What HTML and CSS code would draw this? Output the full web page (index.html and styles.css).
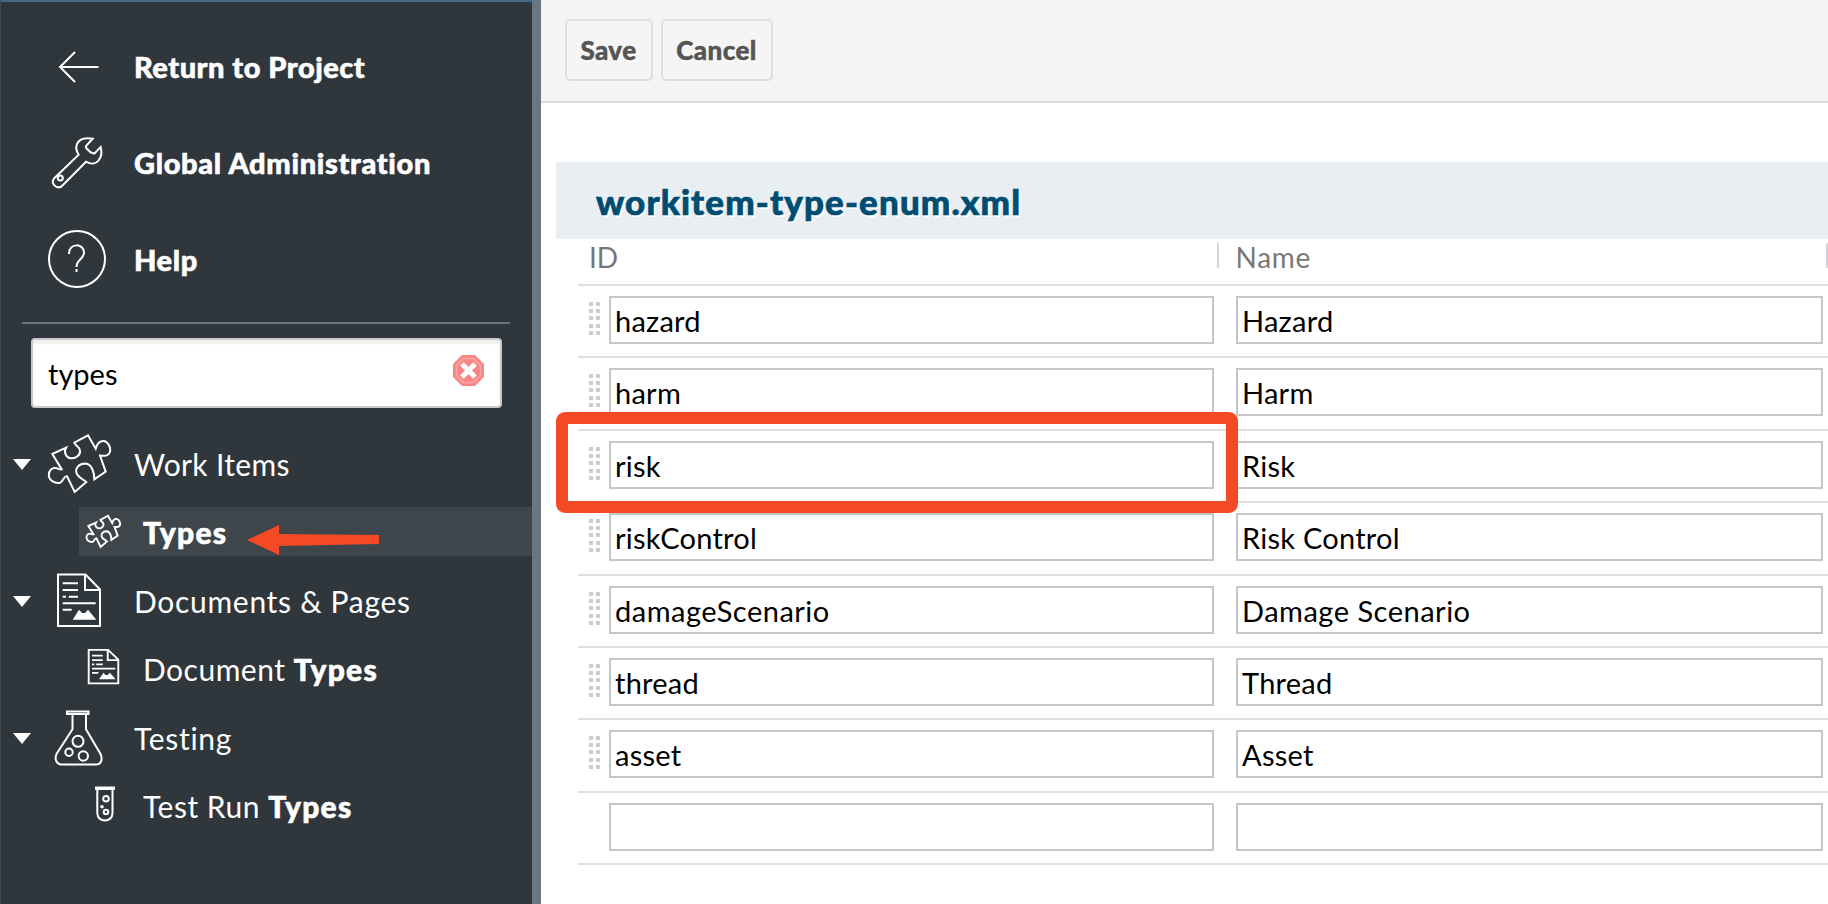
FILE: index.html
```html
<!DOCTYPE html>
<html lang="en">
<head>
<meta charset="utf-8">
<title>workitem-type-enum.xml</title>
<link rel="stylesheet" href="styles.css">
</head>
<body>
<svg class="defs" width="0" height="0">
  <symbol id="puzzle" viewBox="0 0 62 58" overflow="visible">
    <path d="M40 .3 47.7 13.7C49 9 52 5.700 56 6C62 8 64.500 17 59.500 20C57 21.500 54 20.500 52 20.500L57.700 36.700 46.300 44.300C46.500 38 44 29 37.500 28.500C31 28.500 27 33 28.500 38C29.500 42 34 43.500 38.300 47L26.700 57 19 41.300C15.500 41 15.500 46.500 12 47.800C7 49 1 45.500 .8 40C.8 35.500 4 32.500 7.500 33C10 33.200 12 35 13.700 34.300L4.300 19 18 12.700C15.500 17 18 22.500 22.500 23.200C28 24 32.500 20 32 15.500C31.500 11.500 28 11.500 26.300 7.700Z"/>
  </symbol>
  <symbol id="doc" viewBox="10 2 44 54" preserveAspectRatio="none" overflow="visible">
    <path d="M11 3.500H38.500L53 18.500V55H11ZM38 4V19H53M15.700 12.300H31M15.700 19H31M15.700 25.700H19M21.700 25.700H31M15.700 32.300H48.700M15.700 38.700H24.700"/>
    <path class="solid" d="M25.700 48.700 32 38.700 35 42 38 42 41 38.700 49.300 48.700Z"/>
  </symbol>
</svg>
<div class="app">
  <aside class="sidebar">
    <nav class="nav">
      <a class="nav-item"><svg class="icon" viewBox="0 0 60 60"><path d="M13 30H51.500M28 15 13 30 28 45"/></svg><span class="t-return">Return to Project</span></a>
      <a class="nav-item"><svg class="icon" viewBox="0 0 60 60"><path d="M45.700 5.700C38 4.500 32 6.500 30 11C28.500 15 29.500 18.500 31.700 21.700L7 45.500C3.500 50 9 56.500 14.500 53.500L39 28.700C44 31.500 49 31 51.500 27.500C54.500 24 55 19 53.700 14L47.300 20.700 43.500 19.300C41.500 16.500 38 16 39 13Z"/><circle cx="13.300" cy="45" r="2.500"/></svg><span class="t-admin">Global Administration</span></a>
      <a class="nav-item"><svg class="icon" viewBox="0 0 60 60"><circle cx="30" cy="30" r="28"/><path d="M22 25C21.500 13.500 37 14 37 23.500C37 30.500 29.500 30 29.500 38M29.500 40V43"/></svg><span class="t-help">Help</span></a>
    </nav>
    <div class="rule"></div>
    <div class="search"><span class="t-search">types</span>
      <svg class="clear" viewBox="0 0 31 31"><path class="oct" d="M9 0H22L31 9V22L22 31H9L0 22V9Z"/><path class="ring" d="M10.500 3.500H20.500L27.500 10.500V20.500L20.500 27.500H10.500L3.500 20.500V10.500Z"/><path class="cross" d="M9 9 22 22M22 9 9 22"/></svg>
    </div>
    <div class="tree">
      <div class="group"><i class="caret"></i><svg class="icon puzzle"><use href="#puzzle"/></svg><span class="t-work">Work Items</span></div>
      <div class="leaf"><div class="leaf-in selected"><svg class="small puzzle-s"><use href="#puzzle"/></svg><b class="t-types">Types</b></div>
        <svg class="pointer" viewBox="0 0 134 31"><path d="M0 16 32 1V10L132 11V20L32 22V31Z"/></svg></div>
      <div class="group"><i class="caret"></i><svg class="icon doc"><use href="#doc"/></svg><span class="t-docs">Documents &amp; Pages</span></div>
      <div class="leaf"><div class="leaf-in"><svg class="small doc-s"><use href="#doc"/></svg><span class="t-doctypes">Document <b class="t-types">Types</b></span></div></div>
      <div class="group"><i class="caret"></i><svg class="icon" viewBox="0 0 60 60"><path d="M19 3.500H40.500V6H19ZM24.500 6V21.300L8.500 46C6.500 51 8 56 13.500 56.500H48.500C54 56 54.500 50.500 52.500 46L38 21.300V6"/><circle cx="30" cy="33.300" r="5.500"/><circle cx="21" cy="44.300" r="3.700"/><circle cx="35.300" cy="48" r="4.700"/></svg><span class="t-testing">Testing</span></div>
      <div class="leaf"><div class="leaf-in"><svg class="small" viewBox="0 0 36 36"><path d="M10 .5H28V2H10ZM11.300 2V26C11.300 36 26.500 36 26.500 26V2"/><circle cx="20" cy="11.700" r="2.800"/><circle class="solid" cx="16" cy="19.700" r="1.800"/><circle cx="20" cy="25" r="2.300"/></svg><span class="t-run">Test Run <b class="t-types">Types</b></span></div></div>
    </div>
  </aside>
  <main class="main">
    <header class="toolbar"><button class="btn save">Save</button><button class="btn cancel">Cancel</button></header>
    <section class="panel">
      <h1 class="title"><span>workitem-type-enum.xml</span></h1>
      <div class="table">
        <div class="row head"><span class="th-id">ID</span><span class="th-name">Name</span></div>
        <div class="row"><i class="grip"></i><div class="field">hazard</div><div class="field">Hazard</div></div>
        <div class="row"><i class="grip"></i><div class="field">harm</div><div class="field">Harm</div></div>
        <div class="row"><i class="grip"></i><div class="field">risk</div><div class="field">Risk</div><div class="highlight"></div></div>
        <div class="row"><i class="grip"></i><div class="field">riskControl</div><div class="field">Risk Control</div></div>
        <div class="row"><i class="grip"></i><div class="field wide">damageScenario</div><div class="field wide">Damage Scenario</div></div>
        <div class="row"><i class="grip"></i><div class="field">thread</div><div class="field">Thread</div></div>
        <div class="row"><i class="grip"></i><div class="field">asset</div><div class="field">Asset</div></div>
        <div class="row"><i></i><div class="field"></div><div class="field"></div></div>
      </div>
    </section>
  </main>
</div>
</body>
</html>
```
FILE: styles.css
```css
* { box-sizing: border-box; }
body { margin: 0; background: #fff; font-family: Lato, "Noto Sans", sans-serif; font-size: 29px; line-height: 36px; font-variant-ligatures: none; }
.defs { position: absolute; }
.app { display: flex; width: 1828px; height: 904px; overflow: hidden; }

.sidebar { width: 541px; flex: none; background: #2f363c; color: #fff; border-right: 9px solid #6a7780; border-left: 1px solid #434a50; box-shadow: inset 0 2px #40698b; padding-top: 19px; }
.nav-item { display: flex; align-items: center; gap: 27px; height: 96px; padding-left: 46px; font-weight: 900; -webkit-text-stroke: .6px #fff; }
.t-return { letter-spacing: .5px; }
.t-admin { letter-spacing: .66px; }
.t-help { letter-spacing: .6px; padding-top: 1px; }
.icon { width: 60px; height: 60px; flex: none; overflow: visible; }
svg { fill: none; stroke: #fff; stroke-width: 2; }
.solid { fill: #fff; stroke: none; }
.rule { height: 2px; margin: 15px 22px 14px 21px; background: #6a7780; }
.search { display: flex; justify-content: space-between; width: 471px; height: 70px; margin-left: 30px; padding: 15px 16px 0 15px; border: 2px solid #c8c8ca; border-radius: 4px; background: #fff; box-shadow: inset 0 4px 2px #f0f0f0; color: #000; }
.t-search { padding-top: 1px; }
.clear { width: 31px; height: 31px; }
.oct { fill: #fb8585; stroke: none; }
.ring { stroke: #fda9a9; stroke-width: 1.500; }
.cross { stroke: #fff; stroke-width: 5; }

.tree { padding-top: 21.500px; font-size: 30px; }
.group { display: flex; align-items: center; height: 68.500px; padding-left: 12px; }
.caret { border: 9px solid transparent; border-top: 11px solid #fff; border-bottom: 0; margin: 2px 17px 0 0; }
.group .icon { margin-right: 26px; }
.leaf { position: relative; display: flex; align-items: center; height: 68.500px; padding-left: 78px; }
.leaf-in { display: flex; align-items: center; gap: 21px; width: 100%; height: 49px; margin-top: -2px; padding: 2px 0 0 7px; }
.selected { background: #3f464b; }
.small { width: 36px; height: 36px; flex: none; overflow: visible; margin-top: -2px; }
.group .icon.puzzle { width: 62px; height: 58px; margin-right: 24px; }
.small.puzzle-s { width: 34px; height: 33px; margin: -2px 2px 0 0; stroke-width: 3.500; }
.group .icon.doc { width: 44px; height: 54px; margin: -2px 33px 0 9px; }
.small.doc-s { width: 31px; height: 35px; margin: -5px 3px 0 2px; stroke-width: 2.700; }
.t-work { letter-spacing: .35px; }
.t-docs, .t-testing { letter-spacing: .7px; }
.t-doctypes, .t-run { letter-spacing: .5px; }
.leaf b { font-weight: 900; letter-spacing: 1.250px; -webkit-text-stroke: .6px #fff; }
.pointer { position: absolute; left: 246px; top: 26px; width: 134px; height: 31px; fill: #f44925; stroke: none; }

.main { flex: 1; min-width: 0; }
.toolbar { display: flex; gap: 8px; height: 103px; padding: 19px 24px; background: #f4f4f4; border-bottom: 2px solid #dcdcdc; }
.btn { height: 62px; padding: 0 1px 0 0; border: 2px solid #dedede; border-radius: 5px; background: #f5f5f5; color: #555; font: 900 26px/36px Lato, sans-serif; letter-spacing: .4px; text-shadow: 1px 2px 0 #fff; -webkit-text-stroke: .5px #555; }
.save { width: 88px; }
.cancel { width: 112px; }
.panel { padding: 59px 0 0 15px; }
.title { display: flex; align-items: center; height: 77px; margin: 0; padding: 1px 0 0 40px; background: #e9eef3; color: #004d73; font-size: 35px; font-weight: 900; letter-spacing: 1.100px; text-shadow: 2px 2px 0 #fff; -webkit-text-stroke: .7px #004d73; }
.table { padding-left: 22px; }
.row { position: relative; display: grid; grid-template-columns: 31px 605px 587px; height: 72.375px; border-bottom: 2px solid #e0e0e0; align-items: start; }
.row .field + .field { margin-left: 22px; width: 587px; }
.head { display: flex; height: 47px; padding: 3px 0 0 11px; font-size: 28px; color: #777; }
.th-id { width: 631px; height: 25px; margin-top: 1px; border-right: 2px solid #d4d4d8; line-height: 29px; }
.th-name { width: 609px; height: 25px; margin-top: 1px; padding-left: 16px; border-right: 2px solid #d4d4d8; line-height: 29px; letter-spacing: .7px; }
.field { height: 48px; margin-top: 10px; padding: 5px 0 0 4px; border: 2px solid #c6c6c6; background: #fff; color: #000; white-space: nowrap; letter-spacing: .25px; }
.field.wide { letter-spacing: .5px; }
.grip { width: 11px; height: 33px; margin: 16px 0 0 11px; background: repeating-linear-gradient(#fff0 0 4px, #fff 4px 7.200px), linear-gradient(90deg, #ccc 4px, #fff 4px 7px, #ccc 7px); }
.highlight { position: absolute; left: -22px; top: -19px; width: 682px; height: 101px; border: 12px solid #f44925; border-radius: 9px; z-index: 2; }
```
